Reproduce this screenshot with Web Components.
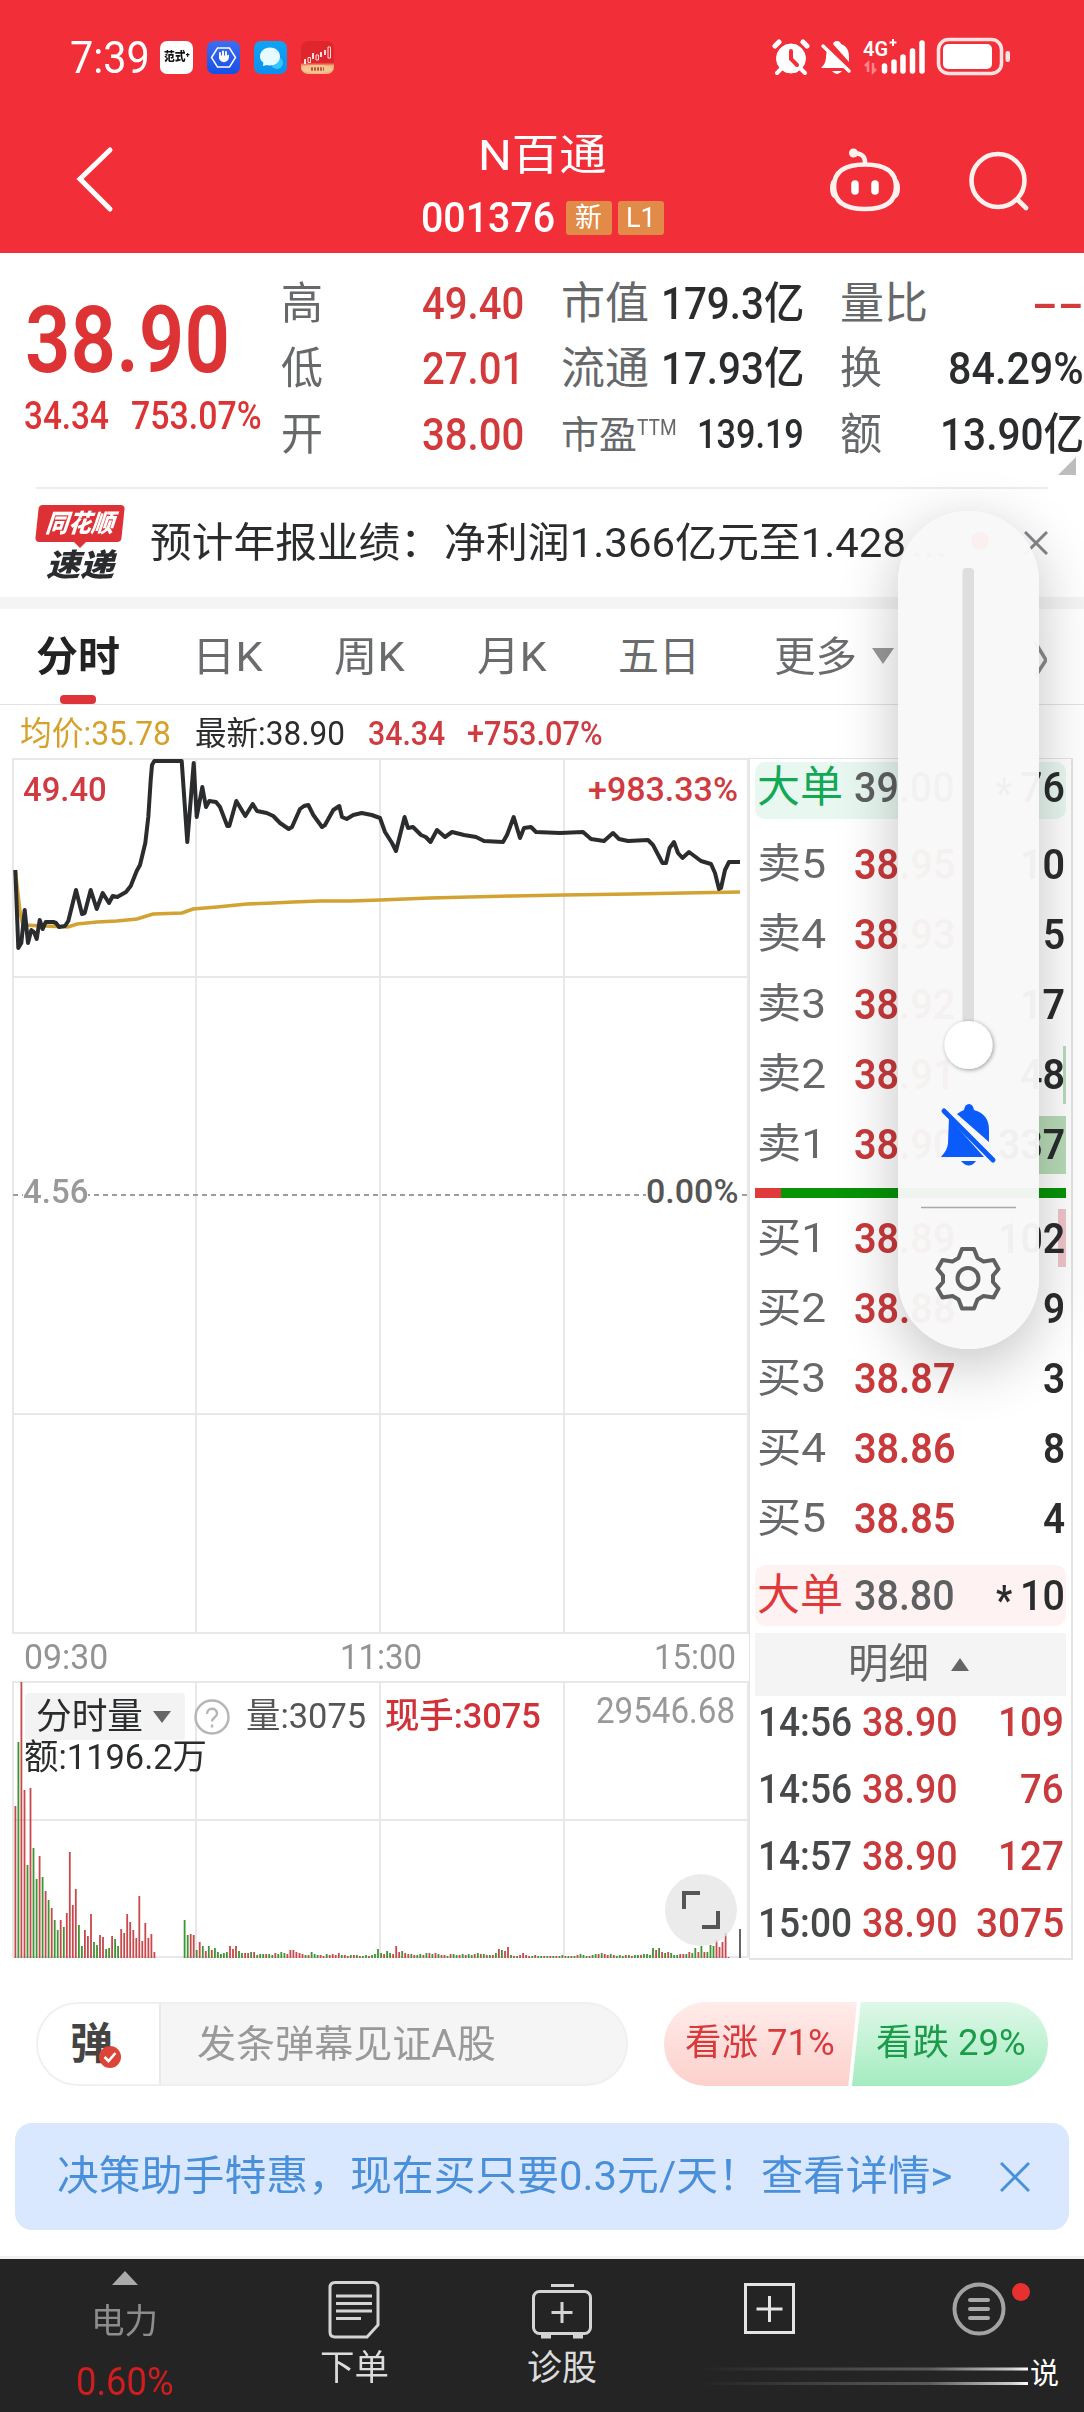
<!DOCTYPE html>
<html lang="zh-CN">
<head>
<meta charset="utf-8">
<title>N百通 001376</title>
<style>
    html, body{
        margin: 0;
        padding: 0;
    }
    body{
        width: 1084px;
        height: 2412px;
        overflow: hidden;
        background: #fff;
        color: #2b2c2e;
        font-family: Roboto, "Noto Sans CJK SC", sans-serif;
    }
</style>
</head>
<body>
<stock-page></stock-page>

<script>
// one line of text, squeezed or stretched to the width in "w"
class FitText extends HTMLElement{
    constructor(){
        super()
        this._shadowRoot = this.attachShadow({mode : 'open'});
        this._shadowRoot.innerHTML = `
    <style>
        :host{
            display: block;
            flex: none;
            white-space: nowrap;
            line-height: 1;
        }
        span{
            display: inline-block;
            transform-origin: 0 50%;
            white-space: pre;
        }
    </style>
    <span><slot></slot></span>`
    }
    connectedCallback(){
        const w = Number(this.getAttribute('w'));
        const span = this._shadowRoot.querySelector('span');
        this.style.width = w + 'px';
        this.style.marginLeft = (this.getAttribute('gap') || 0) + 'px';
        if(this.hasAttribute('size')) this.style.fontSize = this.getAttribute('size') + 'px';
        if(this.hasAttribute('color')) this.style.color = this.getAttribute('color');
        if(this.hasAttribute('weight')) this.style.fontWeight = this.getAttribute('weight');
        span.style.transform = `scaleX(${w / span.offsetWidth})`;
    }
}
window.customElements.define('fit-text', FitText);

class StatusBar extends HTMLElement{
    constructor(){
        super()
        this._shadowRoot = this.attachShadow({mode : 'open'});
        this._shadowRoot.innerHTML = `
    <style>
        :host{
            display: flex;
            height: 44px;
            padding: 35px 72px 0 70px;
            align-items: center;
            color: #fff;
        }
        .apps{
            display: flex;
            gap: 14px;
            margin-left: 10px;
        }
        .app{
            width: 33px;
            height: 33px;
            border-radius: 7px;
            overflow: hidden;
            display: flex;
            align-items: center;
            justify-content: center;
        }
        .fs{ background: #fff; color: #111; }
        .hand{ background: linear-gradient(#3f6df0, #1450e8); }
        .chat{ background: linear-gradient(#0fa4f3, #0d8ff0); }
        .k{ background: linear-gradient(#e0262d 65%, #f3b37c 75%); }
        .right{ margin-left: auto; }
        svg{ display: block; }
    </style>
    <fit-text w="80" size="45">7:39</fit-text>
    <div class="apps">
        <div class="app fs"><fit-text w="26" size="12" weight="900">范式⁺</fit-text></div>
        <div class="app hand"><svg width="33" height="33"><path d="M10.500 7h12l6 9.500-6 9.500h-12l-6-9.500z" fill="none" stroke="#fff" stroke-width="1.500"/><path d="M13 15v-3M16 15v-4.500M19 15v-4" stroke="#fff" stroke-width="1.900" stroke-linecap="round"/><path d="M12 14.500h8l2-1v3c-1 6-8 6-10 1z" fill="#fff"/></svg></div>
        <div class="app chat"><svg width="33" height="33"><circle cx="23" cy="22" r="6" fill="#36c6ff"/><path d="M16 6.500c6 0 10 4 10 9s-4 9-10 9c-1.500 0-2 0-3-.4l-4 1 .3-3.600C7 20 6 18 6 15.500c0-5 4-9 10-9z" fill="#e6fbff"/></svg></div>
        <div class="app k"><svg width="33" height="33"><g stroke="#ffdede" fill="none"><path d="M4 18v5M12 12v6M20 11v5M24 9v5" stroke-width="2"/><path d="M7 16.500h2.500v5H7zM15 14h2.500v5H15zM27 6h2.500v11H27z" stroke-width="1"/></g><ellipse cx="16" cy="28" rx="16" ry="4" fill="#f5c596"/><path d="M10 28h13" stroke="#b5603c" stroke-width="3.500" stroke-dasharray="2 1"/></svg></div>
    </div>
    <svg class="right" width="240" height="42" viewBox="772 35 240 42">
        <g fill="#fff" stroke="#fff" stroke-linecap="round">
            <circle cx="791" cy="57.500" r="14.500"/>
            <path d="M775 45l4-4M807 45l-4-4" stroke-width="5"/>
            <path d="M781 68l-4 4M801 68l4 4" stroke-width="4"/>
            <path d="M791 50v8l6 6" fill="none" stroke="#f22f38" stroke-width="4"/>
        </g>
        <path d="M833 43c1-4 7-4 8 0 6 2 8 7 8 13v5zM827 49l20 18h-26c4-4 5-7 5-12z" fill="#fff"/>
        <path d="M823 45l26 25" stroke="#fff" stroke-width="3.500" stroke-linecap="round"/>
        <path d="M832 70h10q-5 6-10 0z" fill="#fff"/>
        <text x="863" y="55" font-size="20" font-weight="600" fill="#fff" textLength="25" lengthAdjust="spacingAndGlyphs">4G</text>
        <path d="M893 38v7M889.500 41.500h7" stroke="#fff" stroke-width="2"/>
        <path d="M868 71v-9l-3 3M873 62v9l3-3" stroke="#ff858a" stroke-width="2.500" fill="none"/>
        <path d="M884.500 65v5M894 61v9M903 56v14M912.500 50v20M922 42v28" stroke="#fff" stroke-width="5.500" stroke-linecap="round"/>
        <rect x="938.500" y="38.500" width="63" height="34" rx="10" fill="none" stroke="#ffe2e2" stroke-width="3.500"/>
        <rect x="943" y="43" width="49" height="25" rx="5" fill="#fff"/>
        <rect x="1005.500" y="50" width="4.500" height="11" rx="2" fill="#ffe2e2"/>
    </svg>`
    }
}
window.customElements.define('status-bar', StatusBar);

class TitleBar extends HTMLElement{
    constructor(){
        super()
        this._shadowRoot = this.attachShadow({mode : 'open'});
        this._shadowRoot.innerHTML = `
    <style>
        :host{
            display: flex;
            height: 174px;
            color: #fff;
            justify-content: space-between;
        }
        .name{
            display: flex;
            flex-direction: column;
            align-items: center;
            padding-top: 55px;
            height: 119px;
            width: 260px;
        }
        .row{
            display: flex;
            align-items: center;
            height: 36px;
            margin-top: 23px;
        }
        .tag{
            display: flex;
            align-items: center;
            justify-content: center;
            height: 34px;
            width: 46px;
            margin-left: 11px;
            border-radius: 3px;
            background: #e28a48;
        }
        .tag + .tag{ margin-left: 6px; }
        svg{ flex: none; }
    </style>
    <svg width="412" height="174" viewBox="0 79 412 174"><path d="M110 150L80 179l30 30" fill="none" stroke="#fff" stroke-width="5" stroke-linecap="round"/></svg>
    <div class="name">
        <fit-text w="129" size="43">N百通</fit-text>
        <div class="row">
            <fit-text w="134" size="42" weight="500">001376</fit-text>
            <div class="tag"><fit-text w="27" size="27">新</fit-text></div>
            <div class="tag"><fit-text w="30" size="28">L1</fit-text></div>
        </div>
    </div>
    <svg width="412" height="174" viewBox="672 79 412 174">
        <g fill="none" stroke="#fff2ee" stroke-width="4.600" stroke-linecap="round">
            <path d="M865 164.500c21 0 31 8 31 22 0 15-10 22.500-31 22.500s-31-7.500-31-22.500c0-14 10-22 31-22z"/>
            <path d="M834.500 181c-3 2-3 13 .5 15M895.500 181c3 2 3 13-.5 15"/>
            <path d="M865 162c0-5-2-8-10-9"/>
            <circle cx="998" cy="180.500" r="26.500"/>
            <path d="M1018 200l8 8"/>
        </g>
        <circle cx="853.500" cy="153" r="4.500" fill="#fff2ee"/>
        <path d="M855 184v7M875 184v7" stroke="#fff" stroke-width="7.500" stroke-linecap="round"/>
    </svg>`
    }
}
window.customElements.define('title-bar', TitleBar);

class QuoteBoard extends HTMLElement{
    constructor(){
        super()
        this._shadowRoot = this.attachShadow({mode : 'open'});
        this._shadowRoot.innerHTML = `
    <style>
        :host{
            display: flex;
            height: 234px;
            font-size: 44px;
            color: #2b2c2e;
        }
        .price{
            width: 281px;
            color: #dd3335;
        }
        .big{
            padding: 41px 0 0 25px;
            height: 91px;
        }
        .sub{
            display: flex;
            padding: 12px 0 0 24px;
            align-items: center;
        }
        .col{
            display: flex;
            flex-direction: column;
            padding-top: 18px;
        }
        .col div{
            display: flex;
            height: 65.500px;
            align-items: center;
            justify-content: space-between;
            font-weight: 500;
        }
        .l{ color: #66686a; font-weight: 400; }
        .red{ color: #d33a3c; }
        .c1{ width: 243px; }
        .c2{ width: 243px; margin-left: 37px; }
        .c3{ width: 244px; margin-left: 36px; }
        svg{ margin: -11px 8px 0 auto; }
        .ttm{ margin: 0 auto 14px 0; }
    </style>
    <div class="price">
        <div class="big"><fit-text w="205" size="93" weight="600">38.90</fit-text></div>
        <div class="sub">
            <fit-text w="85" size="38" weight="500">34.34</fit-text>
            <fit-text w="131" gap="22" size="38" weight="500">753.07%</fit-text>
        </div>
    </div>
    <div class="col c1">
        <div><fit-text class="l" w="42">高</fit-text><fit-text class="red" w="102">49.40</fit-text></div>
        <div><fit-text class="l" w="42">低</fit-text><fit-text class="red" w="102">27.01</fit-text></div>
        <div><fit-text class="l" w="42">开</fit-text><fit-text class="red" w="102">38.00</fit-text></div>
    </div>
    <div class="col c2">
        <div><fit-text class="l" w="88">市值</fit-text><fit-text w="143">179.3亿</fit-text></div>
        <div><fit-text class="l" w="88">流通</fit-text><fit-text w="143">17.93亿</fit-text></div>
        <div><fit-text class="l" w="76" size="38">市盈</fit-text><fit-text class="l ttm" w="40" size="22">TTM</fit-text><fit-text w="107" size="40">139.19</fit-text></div>
    </div>
    <div class="col c3">
        <div><fit-text class="l" w="88">量比</fit-text><fit-text class="red" w="52">--</fit-text></div>
        <div><fit-text class="l" w="42">换</fit-text><fit-text w="136">84.29%</fit-text></div>
        <div><fit-text class="l" w="42">额</fit-text><fit-text w="144">13.90亿</fit-text></div>
        <svg width="18" height="18"><path d="M18 0v18H0z" fill="#bdbdbd"/></svg>
    </div>`
    }
}
window.customElements.define('quote-board', QuoteBoard);

class NewsLine extends HTMLElement{
    constructor(){
        super()
        this._shadowRoot = this.attachShadow({mode : 'open'});
        this._shadowRoot.innerHTML = `
    <style>
        :host{
            display: flex;
            height: 108px;
            margin: 0 36px;
            border-top: 2px solid #ececec;
            align-items: center;
        }
        .logo{
            width: 88px;
            height: 76px;
            display: flex;
            flex-direction: column;
            align-items: center;
            justify-content: space-between;
            font-style: italic;
            font-weight: 900;
        }
        .flag{
            width: 86px;
            height: 37px;
            display: flex;
            align-items: center;
            justify-content: center;
            background: #de3135;
            border-radius: 4px;
            transform: skewX(-6deg);
        }
        svg{ display: block; margin-left: auto; }
        .tip{ margin: -2px auto 0; }
    </style>
    <div class="logo">
        <div class="flag"><fit-text w="68" size="25" color="#fff">同花顺</fit-text></div>
        <svg class="tip" width="12" height="6"><path d="M0 0h12L6 6z" fill="#de3135"/></svg>
        <fit-text w="68" size="31">速递</fit-text>
    </div>
    <fit-text w="292" gap="26" size="41">预计年报业绩：</fit-text>
    <fit-text w="462" gap="2" size="41">净利润1.366亿元至1.428</fit-text>
    <fit-text w="36" gap="5" size="41" color="#888">...</fit-text>
    <svg width="24" height="24"><path d="M1 1l22 22M23 1L1 23" stroke="#85868a" stroke-width="3"/></svg>`
    }
}
window.customElements.define('news-line', NewsLine);

class PeriodTabs extends HTMLElement{
    constructor(){
        super()
        this._shadowRoot = this.attachShadow({mode : 'open'});
        this._shadowRoot.innerHTML = `
    <style>
        :host{
            display: flex;
            height: 95px;
            border-top: 12px solid #f4f4f4;
            border-bottom: 1px solid #e2e2e2;
            font-size: 41px;
            color: #6a6b6d;
            padding-left: 36px;
        }
        fit-text{ padding-top: 28px; }
        .on{
            color: #222;
            font-weight: 700;
        }
        .cur{ display: flex; flex-direction: column; align-items: center; }
        .cur i{
            width: 36px;
            height: 9px;
            margin-top: auto;
            border-radius: 4px;
            background: #dd3339;
        }
        svg{ margin-top: 31px; }
    </style>
    <div class="cur"><fit-text class="on" w="84">分时</fit-text><i></i></div>
    <fit-text w="71" gap="72">日K</fit-text>
    <fit-text w="71" gap="71">周K</fit-text>
    <fit-text w="70" gap="72">月K</fit-text>
    <fit-text w="82" gap="71">五日</fit-text>
    <fit-text w="83" gap="74">更多</fit-text>
    <svg width="190" height="40"><path d="M15 8h22L26 24z" fill="#9a9a9a"/><path d="M178 2l11 18-11 17" fill="none" stroke="#8c8c8c" stroke-width="3.500"/></svg>`
    }
}
window.customElements.define('period-tabs', PeriodTabs);

class AverageLine extends HTMLElement{
    constructor(){
        super()
        this._shadowRoot = this.attachShadow({mode : 'open'});
        this._shadowRoot.innerHTML = `
    <style>
        :host{
            display: flex;
            height: 53px;
            padding-left: 20px;
            padding-top: 3px;
            box-sizing: border-box;
            align-items: center;
            font-size: 33px;
        }
    </style>
    <fit-text w="151" color="#d6a12a">均价:35.78</fit-text>
    <fit-text w="150" gap="24">最新:38.90</fit-text>
    <fit-text w="77" gap="23" color="#cf3b40" weight="500">34.34</fit-text>
    <fit-text w="136" gap="22" color="#cf3b40" weight="500">+753.07%</fit-text>`
    }
}
window.customElements.define('average-line', AverageLine);

const PRICE = '15.3,870 18.3,948 21.3,943 24.7,910 28,943 31.3,930 34,932 36.7,939 39.7,920 42.7,929 45.7,922 53.3,922 56,923 59,927 65,926 68.3,921 76,890 82,914 84.7,913 90.7,890 96.7,909 102.7,893 109,903 112.7,896 117.3,897 126,892 130.7,886 136.7,871 140,865 145.3,843 148.3,817 150.7,780 152,765 154.3,761 181.7,761 187.3,842 193.7,763 196.7,817 202.3,787 206,807 209.3,801 216,802 220,807 227.3,826 229.3,826 236.3,801 245.3,816 252.7,804 257,811 266.7,813 273.3,816 280,823 288.7,829 292,827 300,809 304,806 308.3,805 313.3,815 322,827 325,825 333.3,810 339.3,806 342,817 346.7,819 353.3,815 361.7,813 371.7,815 380,818 385,832 392,843 396,851 404.6,817 408,828 413,827 421,835 425.7,837 430.500,842 437,830 445,837 452,832 464,835 476,837 484,841 503,842 507,835 513.7,817 520,838 524,828 531,827 536,832 560,833 583,832 591,839 604,841 613,833 619,839 628,841 648,840 653,845 662.5,863 666,863 669.6,848 674,842 678,853 682.5,858 689,852 701,861 711,864 715,873 719,889 721,888 725,870 729,862 740,862';
const AVERAGE = '15.3,870 20,912 23,925 68,927 77,924 97,922 117,921 137,919 153,914 182,913 193,909 217,907 247,904 273,903 293,902 320,901 350,901 380,900 430,898 512,896 564,895 631,894 684,893 740,892';

class PriceChart extends HTMLElement{
    constructor(){
        super()
        this._shadowRoot = this.attachShadow({mode : 'open'});
        this._shadowRoot.innerHTML = `
    <style>
        :host{
            display: grid;
            width: 737px;
            height: 876px;
        }
        svg, .labels{ grid-area: 1 / 1; }
        .labels{
            display: flex;
            flex-direction: column;
            font-size: 34px;
            font-weight: 500;
        }
        .row{
            display: flex;
            justify-content: space-between;
            height: 36px;
            align-items: center;
            padding: 13px 11px 0 11px;
        }
        .mid{ padding-top: 366px; }
        .mid fit-text{ background: #fff; }
        .red{ color: #cf3b40; }
    </style>
    <svg width="737" height="876" viewBox="12 758 737 876">
        <path d="M13 759H748V1633H13zM196 759V1633M380 759V1633M564 759V1633M13 977H748M13 1414H748" fill="none" stroke="#e8e8e8" stroke-width="2"/>
        <path d="M13 1195H748" stroke="#9c9c9c" stroke-width="2" stroke-dasharray="5 4"/>
        <polyline points="${AVERAGE}" fill="none" stroke="#d2a233" stroke-width="3.600"/>
        <polyline points="${PRICE}" fill="none" stroke="#2b2c2e" stroke-width="4" stroke-linejoin="round"/>
    </svg>
    <div class="labels">
        <div class="row red"><fit-text w="84">49.40</fit-text><fit-text w="150">+983.33%</fit-text></div>
        <div class="row mid"><fit-text w="65" color="#999">4.56</fit-text><fit-text w="92" color="#555">0.00%</fit-text></div>
    </div>`
    }
}
window.customElements.define('price-chart', PriceChart);

class TimeAxis extends HTMLElement{
    constructor(){
        super()
        this._shadowRoot = this.attachShadow({mode : 'open'});
        this._shadowRoot.innerHTML = `
    <style>
        :host{
            display: flex;
            justify-content: space-between;
            align-items: center;
            height: 47px;
            padding: 0 13px 0 12px;
            font-size: 35px;
            color: #939393;
        }
    </style>
    <fit-text w="84">09:30</fit-text>
    <fit-text w="82">11:30</fit-text>
    <fit-text w="82">15:00</fit-text>`
    }
}
window.customElements.define('time-axis', TimeAxis);

// volume per minute, a negative value is drawn green
const VOLUME = [
    152, -216, 276, 168, -93, 170, -110, -79, 102, -81, 67, -58, 50, -38, -28, 38, -31, 45, 106, 53, 69, -33, -12, 28, 22, 44, -16, -13, 23, 21, -9, -10, 22, -19, -12, 29, 25, 44, 36, 28, 20, 62, 17, 35, 20, 24, 6,
    0, 0, 0, 0, 0, 0, 0, 0, 0,
    -38, -23, 24, 23, -8, 16, -12, 7, -12, 8, -10, -6, -4, -5, -6, 12, 9, 12, -7, -5, 5, 5, -6, 6, -3, -4, -4, 4, -4, -3, 5, -4, -6, -5, 4, 8, 8, 6, 5, 4, -3, 3, -6, -4, -3, 3, 2, -4, 3, 4, 3, 5, -3, 3, 2, -3, 3, -3, 2, -2, -3, 2, -3, -4, -9, -5, 4, -7, -5, 4, 12, 6, -7, 5, 4, -4, 3, -3, -4, 3, -5, 5, -4, 5, -4, 3, 3, -2, 4, -4, -3, 3, -4, 3, -4, -3, 4, -5, 4, -4, 3, -3, 3, -5, 9, -8, 7, 11, -3, 2, -2, 3, 5, 3, 2, -2, 3, -2, -2, 2, -2, 2, -2, 2, -2, -3, 2, -2, 2, -2, 3, -4, -3, -2, 2, -3, -4, 4, -5, 4, 3, -4, 3, -2, -3, -2, 3, -3, 2, -3, -3, 3, -4, -4, -3, -10, 8, -10, 6, -5, 6, -5, -3, -3, 4, 4, -4, 6, -5, -10, 6, -12, 6, -6, -13, -12, 18, 11, 16, 25, 1
];

class VolumeChart extends HTMLElement{
    constructor(){
        super()
        this._shadowRoot = this.attachShadow({mode : 'open'});
        let red = '', green = '';
        VOLUME.forEach((v, i) => {
            if(v === 0) return;
            const line = `M${(15.4 + i * 3.022).toFixed(1)} 1958v${-Math.abs(v)}`;
            if(v > 0) red += line; else green += line;
        });
        this._shadowRoot.innerHTML = `
    <style>
        :host{
            display: grid;
            width: 737px;
            height: 277px;
        }
        .plot, .over{ grid-area: 1 / 1; }
        .over{
            display: flex;
            flex-direction: column;
            color: #2b2c2e;
        }
        .row{
            display: flex;
            align-items: center;
            height: 47px;
            margin-top: 12px;
            padding-left: 13px;
            font-size: 35px;
        }
        .pick{
            display: flex;
            align-items: center;
            width: 160px;
            height: 47px;
            padding-left: 11px;
            box-sizing: border-box;
            background: #f3f3f3;
            border-radius: 4px;
        }
        .pick svg{ margin-left: 9px; }
        .help{ margin-left: 9px; }
        .sum{ margin: 0 0 0 12px; }
        .full{ margin: 98px 11px 0 auto; }
    </style>
    <svg class="plot" width="737" height="277" viewBox="12 1681 737 277">
        <path d="M13 1682H748V1957H13zM196 1682V1957M380 1682V1957M564 1682V1957M13 1820H748" fill="none" stroke="#e8e8e8" stroke-width="2"/>
        <path d="${red}" stroke="#c9484c" stroke-width="1.800"/>
        <path d="${green}" stroke="#3f9434" stroke-width="1.800"/>
        <path d="M740 1958v-29" stroke="#555" stroke-width="1.800"/>
    </svg>
    <div class="over">
        <div class="row">
            <div class="pick"><fit-text w="107" size="36">分时量</fit-text><svg width="20" height="14"><path d="M1 1h18l-9 12z" fill="#666"/></svg></div>
            <svg class="help" width="36" height="38"><circle cx="18" cy="19" r="16.500" fill="none" stroke="#b5b5b5" stroke-width="2.400"/><path d="M13 16c0-7 10-7 10-.5 0 4-5 4-5 8M18 26.500v3" fill="none" stroke="#b5b5b5" stroke-width="2.400"/></svg>
            <fit-text w="120" gap="16" color="#555">量:3075</fit-text>
            <fit-text w="156" gap="19" color="#cf3339" weight="500">现手:3075</fit-text>
            <fit-text w="139" gap="55" size="36" color="#999" style="height:47px">29546.68</fit-text>
        </div>
        <div class="sum"><fit-text w="183" size="35">额:1196.2万</fit-text></div>
        <svg class="full" width="74" height="74"><circle cx="37" cy="37" r="36" fill="#e6e6e6" fill-opacity=".8"/><path d="M20 36V20h16M54 38v16H38" fill="none" stroke="#555" stroke-width="4"/></svg>
    </div>`
    }
}
window.customElements.define('volume-chart', VolumeChart);

class OrderRow extends HTMLElement{
    constructor(){
        super()
        this._shadowRoot = this.attachShadow({mode : 'open'});
        this._shadowRoot.innerHTML = `
    <style>
        :host{
            display: flex;
            height: 70.200px;
            align-items: center;
            padding: 0 1px 0 2px;
            font-size: 43px;
            box-sizing: border-box;
            background: linear-gradient(var(--depth, transparent), var(--depth, transparent)) no-repeat right center / var(--size, 0) 58px;
        }
        .label{ color: #66686a; }
        .price{ color: #c93a3c; font-weight: 600; }
        .vol{ margin-left: auto; display: flex; font-weight: 600; }
    </style>
    <fit-text class="label" w="69" size="41">${this.getAttribute('label')}</fit-text>
    <fit-text class="price" w="101" gap="28">${this.getAttribute('price')}</fit-text>
    <div class="vol"></div>`
    }
    connectedCallback(){
        // every digit of the volume takes the same width
        const vol = this.getAttribute('vol');
        this._shadowRoot.querySelector('.vol').innerHTML = `<fit-text w="${vol.length * 22.5}">${vol}</fit-text>`;
    }
}
window.customElements.define('order-row', OrderRow);

class BigOrder extends HTMLElement{
    constructor(){
        super()
        this._shadowRoot = this.attachShadow({mode : 'open'});
        const vol = this.getAttribute('vol');
        this._shadowRoot.innerHTML = `
    <style>
        :host{
            display: flex;
            align-items: center;
            padding: 0 1px 0 2px;
            border-radius: 10px;
            font-size: 43px;
            font-weight: 500;
            box-sizing: border-box;
        }
        .label{ font-weight: 400; color: var(--tone); }
        .price{ color: #5f6062; }
        .star{ margin-left: auto !important; padding-top: 12px; }
    </style>
    <fit-text class="label" w="86" size="43">大单</fit-text>
    <fit-text class="price" w="101" gap="11">${this.getAttribute('price')}</fit-text>
    <fit-text class="star" w="16" size="40" weight="700">*</fit-text>
    <fit-text w="45" gap="8">${vol}</fit-text>`
    }
}
window.customElements.define('big-order', BigOrder);

class TradeRow extends HTMLElement{
    constructor(){
        super()
        this._shadowRoot = this.attachShadow({mode : 'open'});
        const vol = this.getAttribute('vol');
        this._shadowRoot.innerHTML = `
    <style>
        :host{
            display: flex;
            align-items: center;
            height: 67px;
            padding: 0 2px 0 3px;
            font-size: 41px;
            font-weight: 500;
            color: #c93a3c;
        }
        div{ margin-left: auto; }
    </style>
    <fit-text w="94" color="#47484a">${this.getAttribute('time')}</fit-text>
    <fit-text w="96" gap="10">38.90</fit-text>
    <div><fit-text w="${vol.length * 22}">${vol}</fit-text></div>`
    }
}
window.customElements.define('trade-row', TradeRow);

class OrderBook extends HTMLElement{
    constructor(){
        super()
        this._shadowRoot = this.attachShadow({mode : 'open'});
        this._shadowRoot.innerHTML = `
    <style>
        :host{
            display: flex;
            flex-direction: column;
            width: 311px;
            height: 1196px;
            padding: 3px 5px 0 5px;
            border: 1px solid #e4e4e4;
            border-width: 1px 2px 2px 1px;
        }
        .ask{ height: 57px; flex: none; --tone: #12a856; background: #e8f8f0; margin-bottom: 10px; padding-bottom: 6px; }
        .bid{ height: 61px; flex: none; --tone: #e0393a; background: #fef3f2; margin-top: 11px; }
        .ratio{
            height: 10px;
            margin: 8px 0 5px;
            background: linear-gradient(90deg, #e03a3c 8.2%, #079407 8.2%);
        }
        .more{
            display: flex;
            align-items: center;
            justify-content: center;
            gap: 22px;
            height: 63px;
            margin: 7px 0 -7px;
            padding-right: 5px;
            background: #f4f4f4;
            color: #666;
        }
    </style>
    <big-order class="ask" price="39.00" vol="76"></big-order>
    <order-row label="卖5" price="38.95" vol="10"></order-row>
    <order-row label="卖4" price="38.93" vol="5"></order-row>
    <order-row label="卖3" price="38.92" vol="17"></order-row>
    <order-row label="卖2" price="38.91" vol="48" style="--depth:#b9dcb9;--size:3px"></order-row>
    <order-row label="卖1" price="38.90" vol="337" style="--depth:#b9dcb9;--size:28px"></order-row>
    <div class="ratio"></div>
    <order-row label="买1" price="38.89" vol="102" style="--depth:#f0c5cb;--size:8px"></order-row>
    <order-row label="买2" price="38.88" vol="9"></order-row>
    <order-row label="买3" price="38.87" vol="3"></order-row>
    <order-row label="买4" price="38.86" vol="8"></order-row>
    <order-row label="买5" price="38.85" vol="4"></order-row>
    <big-order class="bid" price="38.80" vol="10"></big-order>
    <div class="more"><fit-text w="81" size="41">明细</fit-text><svg width="18" height="13"><path d="M9 0l9 13H0z" fill="#666"/></svg></div>
    <trade-row time="14:56" vol="109"></trade-row>
    <trade-row time="14:56" vol="76"></trade-row>
    <trade-row time="14:57" vol="127"></trade-row>
    <trade-row time="15:00" vol="3075"></trade-row>`
    }
}
window.customElements.define('order-book', OrderBook);

class CommentBar extends HTMLElement{
    constructor(){
        super()
        this._shadowRoot = this.attachShadow({mode : 'open'});
        this._shadowRoot.innerHTML = `
    <style>
        :host{
            display: flex;
            justify-content: space-between;
            height: 84px;
            padding: 43px 36px 0;
        }
        .box{
            display: flex;
            align-items: center;
            width: 592px;
            height: 84px;
            box-sizing: border-box;
            border: 2px solid #f0f0f0;
            border-radius: 42px;
            background: #f5f5f5;
            overflow: hidden;
        }
        .mark{
            display: flex;
            align-items: center;
            width: 123px;
            height: 84px;
            padding-left: 32px;
            box-sizing: border-box;
            background: #fff;
            border-right: 2px solid #eaeaea;
        }
        .mark svg{ margin: 26px 0 0 -15px; position: relative; }
        .vote{
            display: flex;
            align-items: center;
            width: 384px;
            height: 84px;
            border-radius: 42px;
            overflow: hidden;
        }
        .up, .down{
            display: flex;
            align-items: center;
            height: 84px;
            box-sizing: border-box;
            padding-bottom: 2px;
        }
        .up{
            width: 195px;
            padding-left: 21px;
            background: linear-gradient(#ffecea, #fcd0cb);
            color: #d8393b;
            clip-path: polygon(0 0, 100% 0, 95.500% 100%, 0 100%);
        }
        .down{
            width: 198px;
            margin-left: -5px;
            padding-left: 24px;
            background: linear-gradient(#dff8e8, #a3ecc0);
            color: #1b9c4a;
            clip-path: polygon(4.500% 0, 100% 0, 100% 100%, 0 100%);
        }
    </style>
    <div class="box">
        <div class="mark"><fit-text w="43" size="43" weight="700" color="#444">弹</fit-text><svg width="24" height="24"><circle cx="12" cy="12" r="11" fill="#dc4438"/><path d="M6.500 12l4 4 7-8" fill="none" stroke="#fff" stroke-width="2.600"/></svg></div>
        <fit-text w="299" gap="36" size="38" color="#999">发条弹幕见证A股</fit-text>
    </div>
    <div class="vote">
        <div class="up"><fit-text w="150" size="36">看涨 71%</fit-text></div>
        <div class="down"><fit-text w="150" size="36">看跌 29%</fit-text></div>
    </div>`
    }
}
window.customElements.define('comment-bar', CommentBar);

class PromoBanner extends HTMLElement{
    constructor(){
        super()
        this._shadowRoot = this.attachShadow({mode : 'open'});
        this._shadowRoot.innerHTML = `
    <style>
        :host{
            display: flex;
            align-items: center;
            height: 107px;
            margin: 37px 15px 0;
            padding: 0 39px 0 42px;
            border-radius: 17px;
            background: #d9e8fe;
            color: #4a8fd9;
            font-size: 41px;
        }
        svg{ margin-left: auto; }
    </style>
    <fit-text w="293">决策助手特惠，</fit-text>
    <fit-text w="410">现在买只要0.3元/天！</fit-text>
    <fit-text w="191" gap="1">查看详情&gt;</fit-text>
    <svg width="30" height="30"><path d="M1 1l28 28M29 1L1 29" stroke="#4a8fd9" stroke-width="3"/></svg>`
    }
}
window.customElements.define('promo-banner', PromoBanner);

class BottomNav extends HTMLElement{
    constructor(){
        super()
        this._shadowRoot = this.attachShadow({mode : 'open'});
        this._shadowRoot.innerHTML = `
    <style>
        :host{
            display: flex;
            height: 153px;
            margin-top: 26px;
            border-top: 3px solid #f1f1f1;
            background: #242424;
            background-clip: padding-box;
            color: #dcdcdc;
        }
        div{
            display: flex;
            flex-direction: column;
            align-items: center;
        }
        svg{ display: block; flex: none; }
        .index{ width: 249px; }
        .trade{ width: 210px; }
        .check{ width: 206px; }
        .tail{ width: 419px; }
        .index fit-text:first-of-type{ margin-top: 19px !important; }
        .index fit-text:last-of-type{ margin-top: 25px !important; }
        .trade fit-text, .check fit-text{ margin-top: 12px !important; }
    </style>
    <div class="index">
        <svg width="26" height="26"><path d="M13 12l13 14H0z" fill="#aaa"/></svg>
        <fit-text w="67" size="34" color="#8d8d8d">电力</fit-text>
        <fit-text w="98" size="39" color="#d01d1f">0.60%</fit-text>
    </div>
    <div class="trade">
        <svg width="54" height="80" viewBox="0 0 54 80"><g fill="none" stroke="#d4d4d4" stroke-width="3"><path d="M8 23.500h38q5 0 5 5V66L40 78H8q-5 0-5-5V28.500q0-5 5-5z"/><path d="M9 37h36M9 44.500h36M9 52h36M9 59.500h25"/></g></svg>
        <fit-text w="69" size="35">下单</fit-text>
    </div>
    <div class="check">
        <svg width="62" height="80" viewBox="0 0 62 80"><g fill="none" stroke="#d4d4d4" stroke-width="3"><rect x="2.500" y="32.500" width="57" height="42" rx="6"/><path d="M20 26.500h23M31 43v21M20.500 53.500h21"/><path d="M10 77.500h10M42 77.500h10" stroke-width="4"/></g></svg>
        <fit-text w="70" size="35">诊股</fit-text>
    </div>
    <div class="tail">
        <svg width="419" height="153" viewBox="665 2259 419 153">
            <defs><linearGradient id="fade"><stop offset="0" stop-color="#242424"/><stop offset=".7" stop-color="#5c5c5c"/><stop offset=".95" stop-color="#ccc"/><stop offset="1" stop-color="#fff"/></linearGradient></defs>
            <path d="M745.500 2284.500h48v48h-48zM769.500 2296v26M756.500 2309h26" fill="none" stroke="#e4e4e4" stroke-width="3"/>
            <circle cx="979" cy="2309" r="24.500" fill="none" stroke="#a3a3a3" stroke-width="4"/>
            <path d="M970 2300h18M970 2309h18M970 2318h18" stroke="#a8a8a8" stroke-width="4" stroke-linecap="round"/>
            <circle cx="1021" cy="2292" r="9" fill="#e8302f"/>
            <rect x="700" y="2367.500" width="328" height="3" fill="url(#fade)"/>
            <rect x="700" y="2382" width="328" height="3" fill="url(#fade)"/>
            <text x="1030" y="2384" font-size="29" fill="#fff">说</text>
        </svg>
    </div>`
    }
}
window.customElements.define('bottom-nav', BottomNav);

// volume slider of the phone, floats over the page
class VolumePanel extends HTMLElement{
    constructor(){
        super()
        this._shadowRoot = this.attachShadow({mode : 'open'});
        this._shadowRoot.innerHTML = `
    <style>
        :host{
            position: absolute;
            left: 898px;
            top: 511px;
            width: 141px;
            height: 838px;
            border-radius: 70.500px;
            background: rgba(248, 248, 248, .965);
            box-shadow: 0 16px 60px rgba(0, 0, 0, .24);
        }
        svg{ display: block; }
    </style>
    <svg width="141" height="838" viewBox="898 511 141 838">
        <defs><filter id="s" x="-30%" y="-30%" width="160%" height="160%"><feDropShadow dx="1" dy="1" stdDeviation="2" flood-opacity=".4"/></filter></defs>
        <circle cx="980" cy="541" r="9" fill="#f9f0ef"/>
        <rect x="962.500" y="568" width="11.500" height="480" rx="4" fill="#dedede"/>
        <circle cx="968.500" cy="1045" r="24" fill="#fff" filter="url(#s)"/>
        <path d="M957 1114q4-3 7-4 1-6 5-6t5 6q15 4 15 20v12zM949 1118l35 39H941q7-8 7-14z" fill="#0b5bfa"/>
        <path d="M944 1111l49 49" stroke="#0b5bfa" stroke-width="5" stroke-linecap="round"/>
        <path d="M961 1161h15q-7 9-15 0z" fill="#0b5bfa"/>
        <path d="M921 1207.500h95" stroke="#a9a9a9" stroke-width="1.500"/>
        <g fill="none" stroke="#5f6062" stroke-width="4" stroke-linejoin="round">
            <circle cx="968" cy="1278.500" r="10.500"/>
            <path d="M962 1249h12l3.500 9 6 3.500 10-1.500 5 9-5.500 6.500v6.500l5.500 6.500-5 9-10-1.500-6 3.500-3.500 9h-12l-3.500-9-6-3.500-10 1.500-5-9 5.500-6.500v-6.500l-5.500-6.500 5-9 10 1.500 6-3.500z"/>
        </g>
    </svg>`
    }
}
window.customElements.define('volume-panel', VolumePanel);

class StockPage extends HTMLElement{
    constructor(){
        super()
        this._shadowRoot = this.attachShadow({mode : 'open'});
        this._shadowRoot.innerHTML = `
    <style>
        :host{
            display: flex;
            flex-direction: column;
            position: relative;
            width: 1084px;
            height: 2412px;
            overflow: hidden;
        }
        :host > *{ flex: none; }
        header{
            background: #f22f38;
            height: 253px;
        }
        main{
            display: flex;
            height: 1201px;
            padding-left: 12px;
        }
    </style>
    <header>
        <status-bar></status-bar>
        <title-bar></title-bar>
    </header>
    <quote-board></quote-board>
    <news-line></news-line>
    <period-tabs></period-tabs>
    <average-line></average-line>
    <main>
        <div>
            <price-chart></price-chart>
            <time-axis></time-axis>
            <volume-chart></volume-chart>
        </div>
        <order-book></order-book>
    </main>
    <comment-bar></comment-bar>
    <promo-banner></promo-banner>
    <bottom-nav></bottom-nav>
    <volume-panel></volume-panel>`
    }
}
window.customElements.define('stock-page', StockPage);
</script>
</body>
</html>
